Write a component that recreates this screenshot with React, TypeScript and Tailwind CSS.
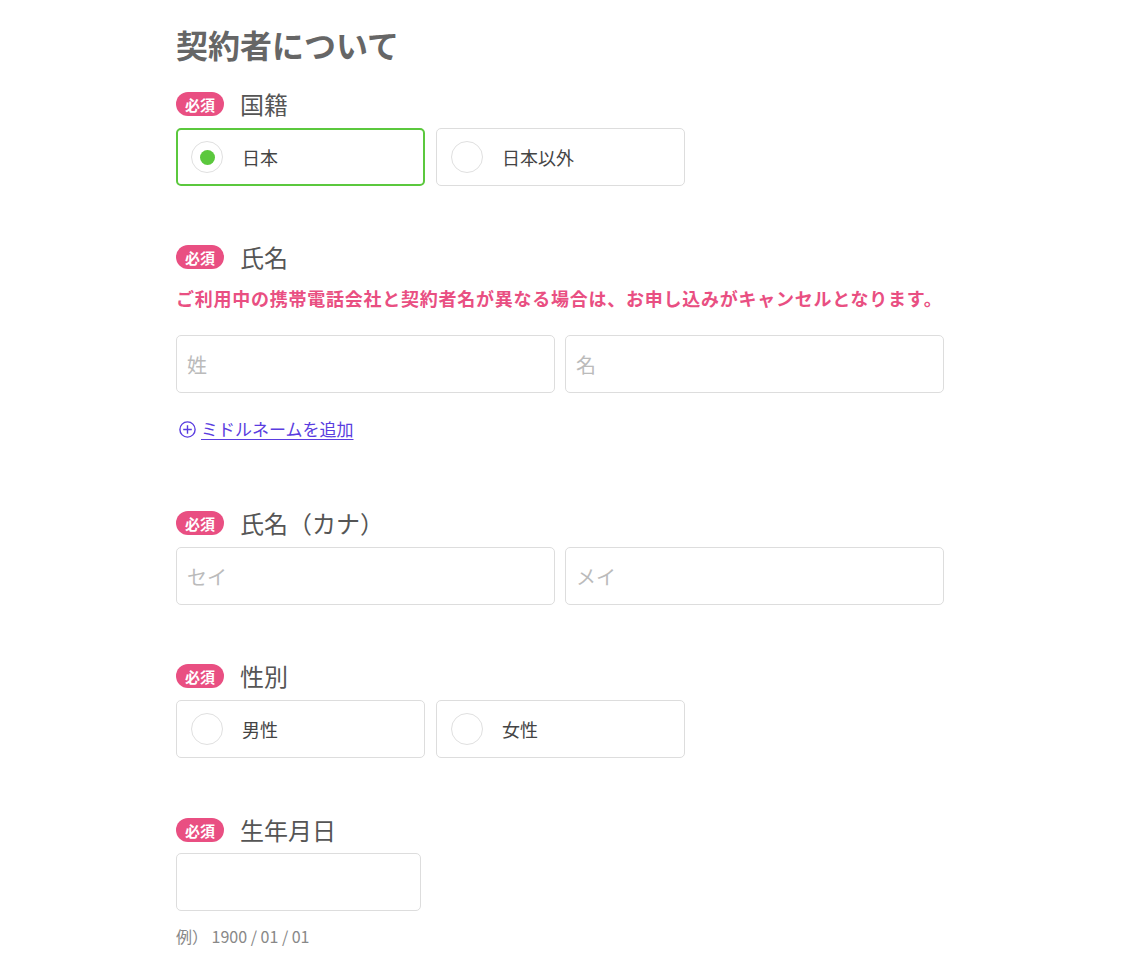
import React from "react";

const font = { fontFamily: '"Noto Sans CJK JP", "Noto Sans", sans-serif' };

function Badge() {
  return (
    <span className="inline-flex h-[24px] w-[48px] items-center justify-center rounded-full bg-[#e94f82] text-[15px] font-bold leading-none text-white">
      必須
    </span>
  );
}

function Label({ text }: { text: string }) {
  return (
    <div className="flex h-[36px] items-center gap-[16px]">
      <Badge />
      <span className="text-[24px] leading-none text-[#555555]">{text}</span>
    </div>
  );
}

function Radio({ label, checked }: { label: string; checked?: boolean }) {
  return (
    <div
      className={
        checked
          ? "flex h-[58px] w-[249px] items-center rounded-[5px] border-2 border-[#5bc83d] pl-[13px]"
          : "flex h-[58px] w-[249px] items-center rounded-[5px] border border-[#dddddd] pl-[14px]"
      }
    >
      <span className="flex h-[32px] w-[32px] items-center justify-center rounded-full border border-[#e0e0e0] bg-white">
        {checked && <span className="h-[15px] w-[15px] rounded-full bg-[#5bc83d]" />}
      </span>
      <span className="ml-[19px] text-[18px] text-[#444444]">{label}</span>
    </div>
  );
}

function Input({ placeholder, w = "w-[379px]" }: { placeholder?: string; w?: string }) {
  return (
    <div className={`flex h-[58px] ${w} items-center rounded-[5px] border border-[#dddddd] pl-[10px] pt-[2px] text-[20px] text-[#bbbbbb]`}>
      {placeholder}
    </div>
  );
}

export default function App() {
  return (
    <div className="min-h-[966px] bg-white" style={font}>
      <div className="ml-[176px] w-[768px] pt-[22px]">
        <h1 className="flex h-[44px] items-center text-[32px] font-bold leading-none text-[#666666]">
          契約者について
        </h1>

        <div className="mt-[20px]">
          <Label text="国籍" />
          <div className="mt-[6px] flex gap-[11px]">
            <Radio label="日本" checked />
            <Radio label="日本以外" />
          </div>
        </div>

        <div className="mt-[53px]">
          <Label text="氏名" />
          <p className="mt-[9px] flex h-[28px] items-center whitespace-nowrap text-[18px] font-bold tracking-[0.75px] text-[#e94f82]">
            ご利用中の携帯電話会社と契約者名が異なる場合は、お申し込みがキャンセルとなります。
          </p>
          <div className="mt-[23px] flex gap-[10px]">
            <Input placeholder="姓" />
            <Input placeholder="名" />
          </div>
          <div className="mt-[24px] flex h-[24px] items-center pl-[3px] text-[#5a3de0]">
            <svg width="17" height="17" viewBox="0 0 17 17" fill="none" stroke="currentColor" strokeWidth="1.4">
              <circle cx="8.5" cy="8.5" r="7.6" />
              <path d="M8.5 4.2v8.6M4.2 8.5h8.6" />
            </svg>
            <span className="ml-[5px] text-[17px] underline underline-offset-[3px]">ミドルネームを追加</span>
          </div>
        </div>

        <div className="mt-[64px]">
          <Label text="氏名（カナ）" />
          <div className="mt-[6px] flex gap-[10px]">
            <Input placeholder="セイ" />
            <Input placeholder="メイ" />
          </div>
        </div>

        <div className="mt-[53px]">
          <Label text="性別" />
          <div className="mt-[6px] flex gap-[11px]">
            <Radio label="男性" />
            <Radio label="女性" />
          </div>
        </div>

        <div className="mt-[54px]">
          <Label text="生年月日" />
          <div className="mt-[5px]">
            <Input w="w-[245px]" />
          </div>
          <p className="mt-[13px] flex h-[24px] items-center text-[16px] text-[#888888]">
            例）&nbsp;1900 / 01 / 01
          </p>
        </div>
      </div>
    </div>
  );
}
